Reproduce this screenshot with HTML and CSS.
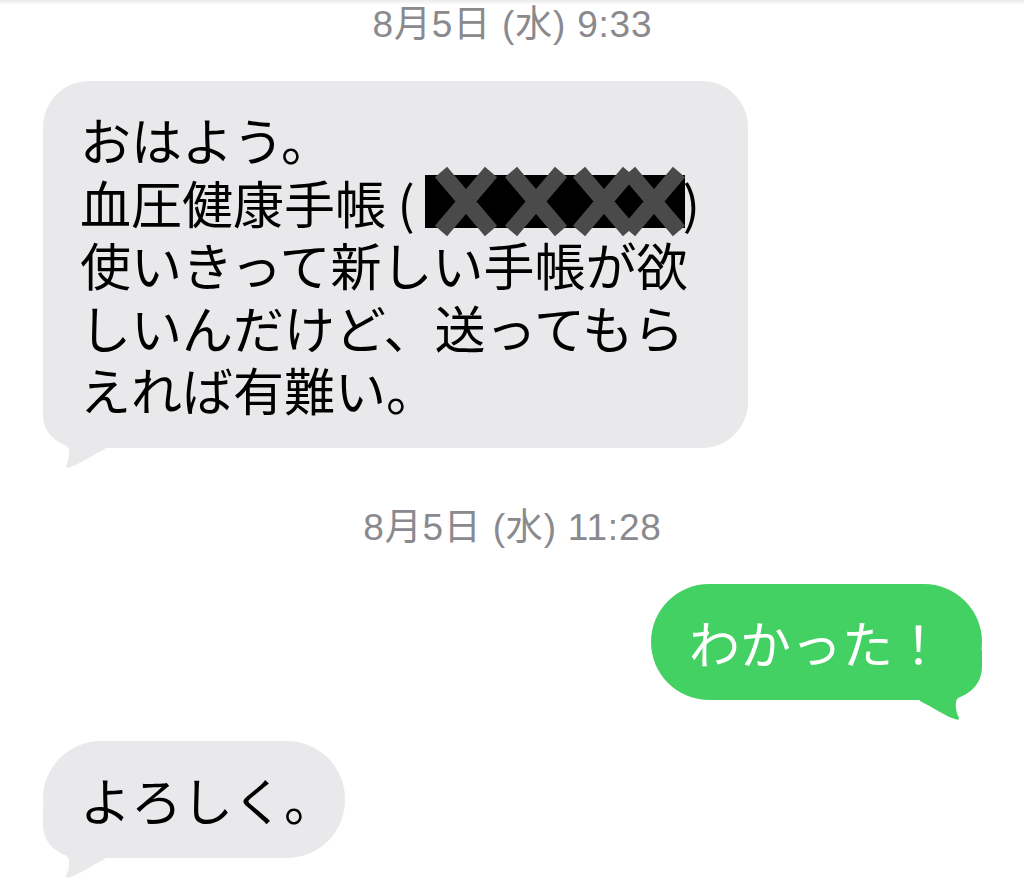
FILE: index.html
```html
<!DOCTYPE html>
<html lang="ja">
<head>
  <meta charset="UTF-8" />
  <meta name="viewport" content="width=device-width, initial-scale=1.0" />
  <title>メッセージ</title>
  <link rel="stylesheet" href="styles.css">
</head>
<body>
  <div class="thread">
    <div class="stamp">8月5日 (水) 9:33</div>

    <div class="bubble them long">
      おはよう。<br>
      血圧健康手帳 (<svg class="redact" viewBox="0 0 262 62" width="262" height="62">
        <rect x="0" y="4" width="260" height="53" fill="#000" />
        <g stroke="#4a4a4a" stroke-width="16">
          <path d="M16 1 L66 60 M66 1 L16 60" />
          <path d="M86 1 L136 60 M136 1 L86 60" />
          <path d="M154 1 L204 60 M204 1 L154 60" />
          <path d="M204 1 L254 60 M254 1 L204 60" />
        </g>
      </svg>)<br>
      使いきって新しい手帳が欲しいんだけど、送ってもらえれば有難い。
      <svg class="tail" viewBox="0 0 64 72" width="64" height="72"><path d="M0 0 L0 16 C0 36 14 44 24 48 C28 52 26 62 23 68 Q23 71 27 69 C37 66 48 58 62 51 L62 0 Z" /></svg>
    </div>

    <div class="stamp gap">8月5日 (水) 11:28</div>

    <div class="bubble me">
      わかった！
      <svg class="tail" viewBox="0 0 64 72" width="64" height="72"><path d="M0 0 L0 16 C0 36 14 44 24 48 C28 52 26 62 23 68 Q23 71 27 69 C37 66 48 58 62 51 L62 0 Z" /></svg>
    </div>

    <div class="bubble them last">
      よろしく。
      <svg class="tail" viewBox="0 0 64 72" width="64" height="72"><path d="M0 0 L0 16 C0 36 14 44 24 48 C28 52 26 62 23 68 Q23 71 27 69 C37 66 48 58 62 51 L62 0 Z" /></svg>
    </div>
  </div>
</body>
</html>
```

FILE: styles.css
```css
:root {
  --gray: #e9e9eb;
  --green: #44d163;
  --stamp: #8a8a8e;
  --text: #000000;
}

* {
  box-sizing: border-box;
}

html {
  background: #ffffff;
}

body {
  margin: 0;
  background: linear-gradient(#ebebeb, #ffffff) no-repeat;
  background-size: 100% 5px;
  font-family: "Noto Sans CJK JP", sans-serif;
  color: var(--text);
}

.thread {
  display: flex;
  flex-direction: column;
  align-items: flex-start;
  padding: 5px 42px 40px 43px;
}

.stamp {
  align-self: center;
  font-family: "Liberation Sans", "Noto Sans CJK JP", sans-serif;
  font-size: 37px;
  letter-spacing: 0.8px;
  line-height: 40px;
  color: var(--stamp);
}

.stamp.gap {
  margin-top: 60px;
}

.bubble {
  position: relative;
  isolation: isolate;
  max-width: 705px;
  padding: 27px 38px 27px 37px;
  border-radius: 58px;
  font-size: 51px;
  line-height: 62.5px;
  white-space: nowrap;
}

.bubble.long {
  margin-top: 36px;
  border-radius: 46px;
  white-space: normal;
}

.them {
  background-color: var(--gray);
  fill: var(--gray);
}

.me {
  align-self: flex-end;
  margin-top: 36px;
  padding-left: 38px;
  background-color: var(--green);
  fill: var(--green);
  color: #ffffff;
}

.bubble.last {
  margin-top: 41px;
  padding-right: 10px;
}

.redact {
  vertical-align: -9px;
  margin-left: 10px;
  margin-right: -4px;
  overflow: visible;
}

.tail {
  position: absolute;
  z-index: -1;
  left: 0;
  bottom: -22px;
}

.me .tail {
  left: auto;
  right: 0;
  transform: scaleX(-1);
}
```
